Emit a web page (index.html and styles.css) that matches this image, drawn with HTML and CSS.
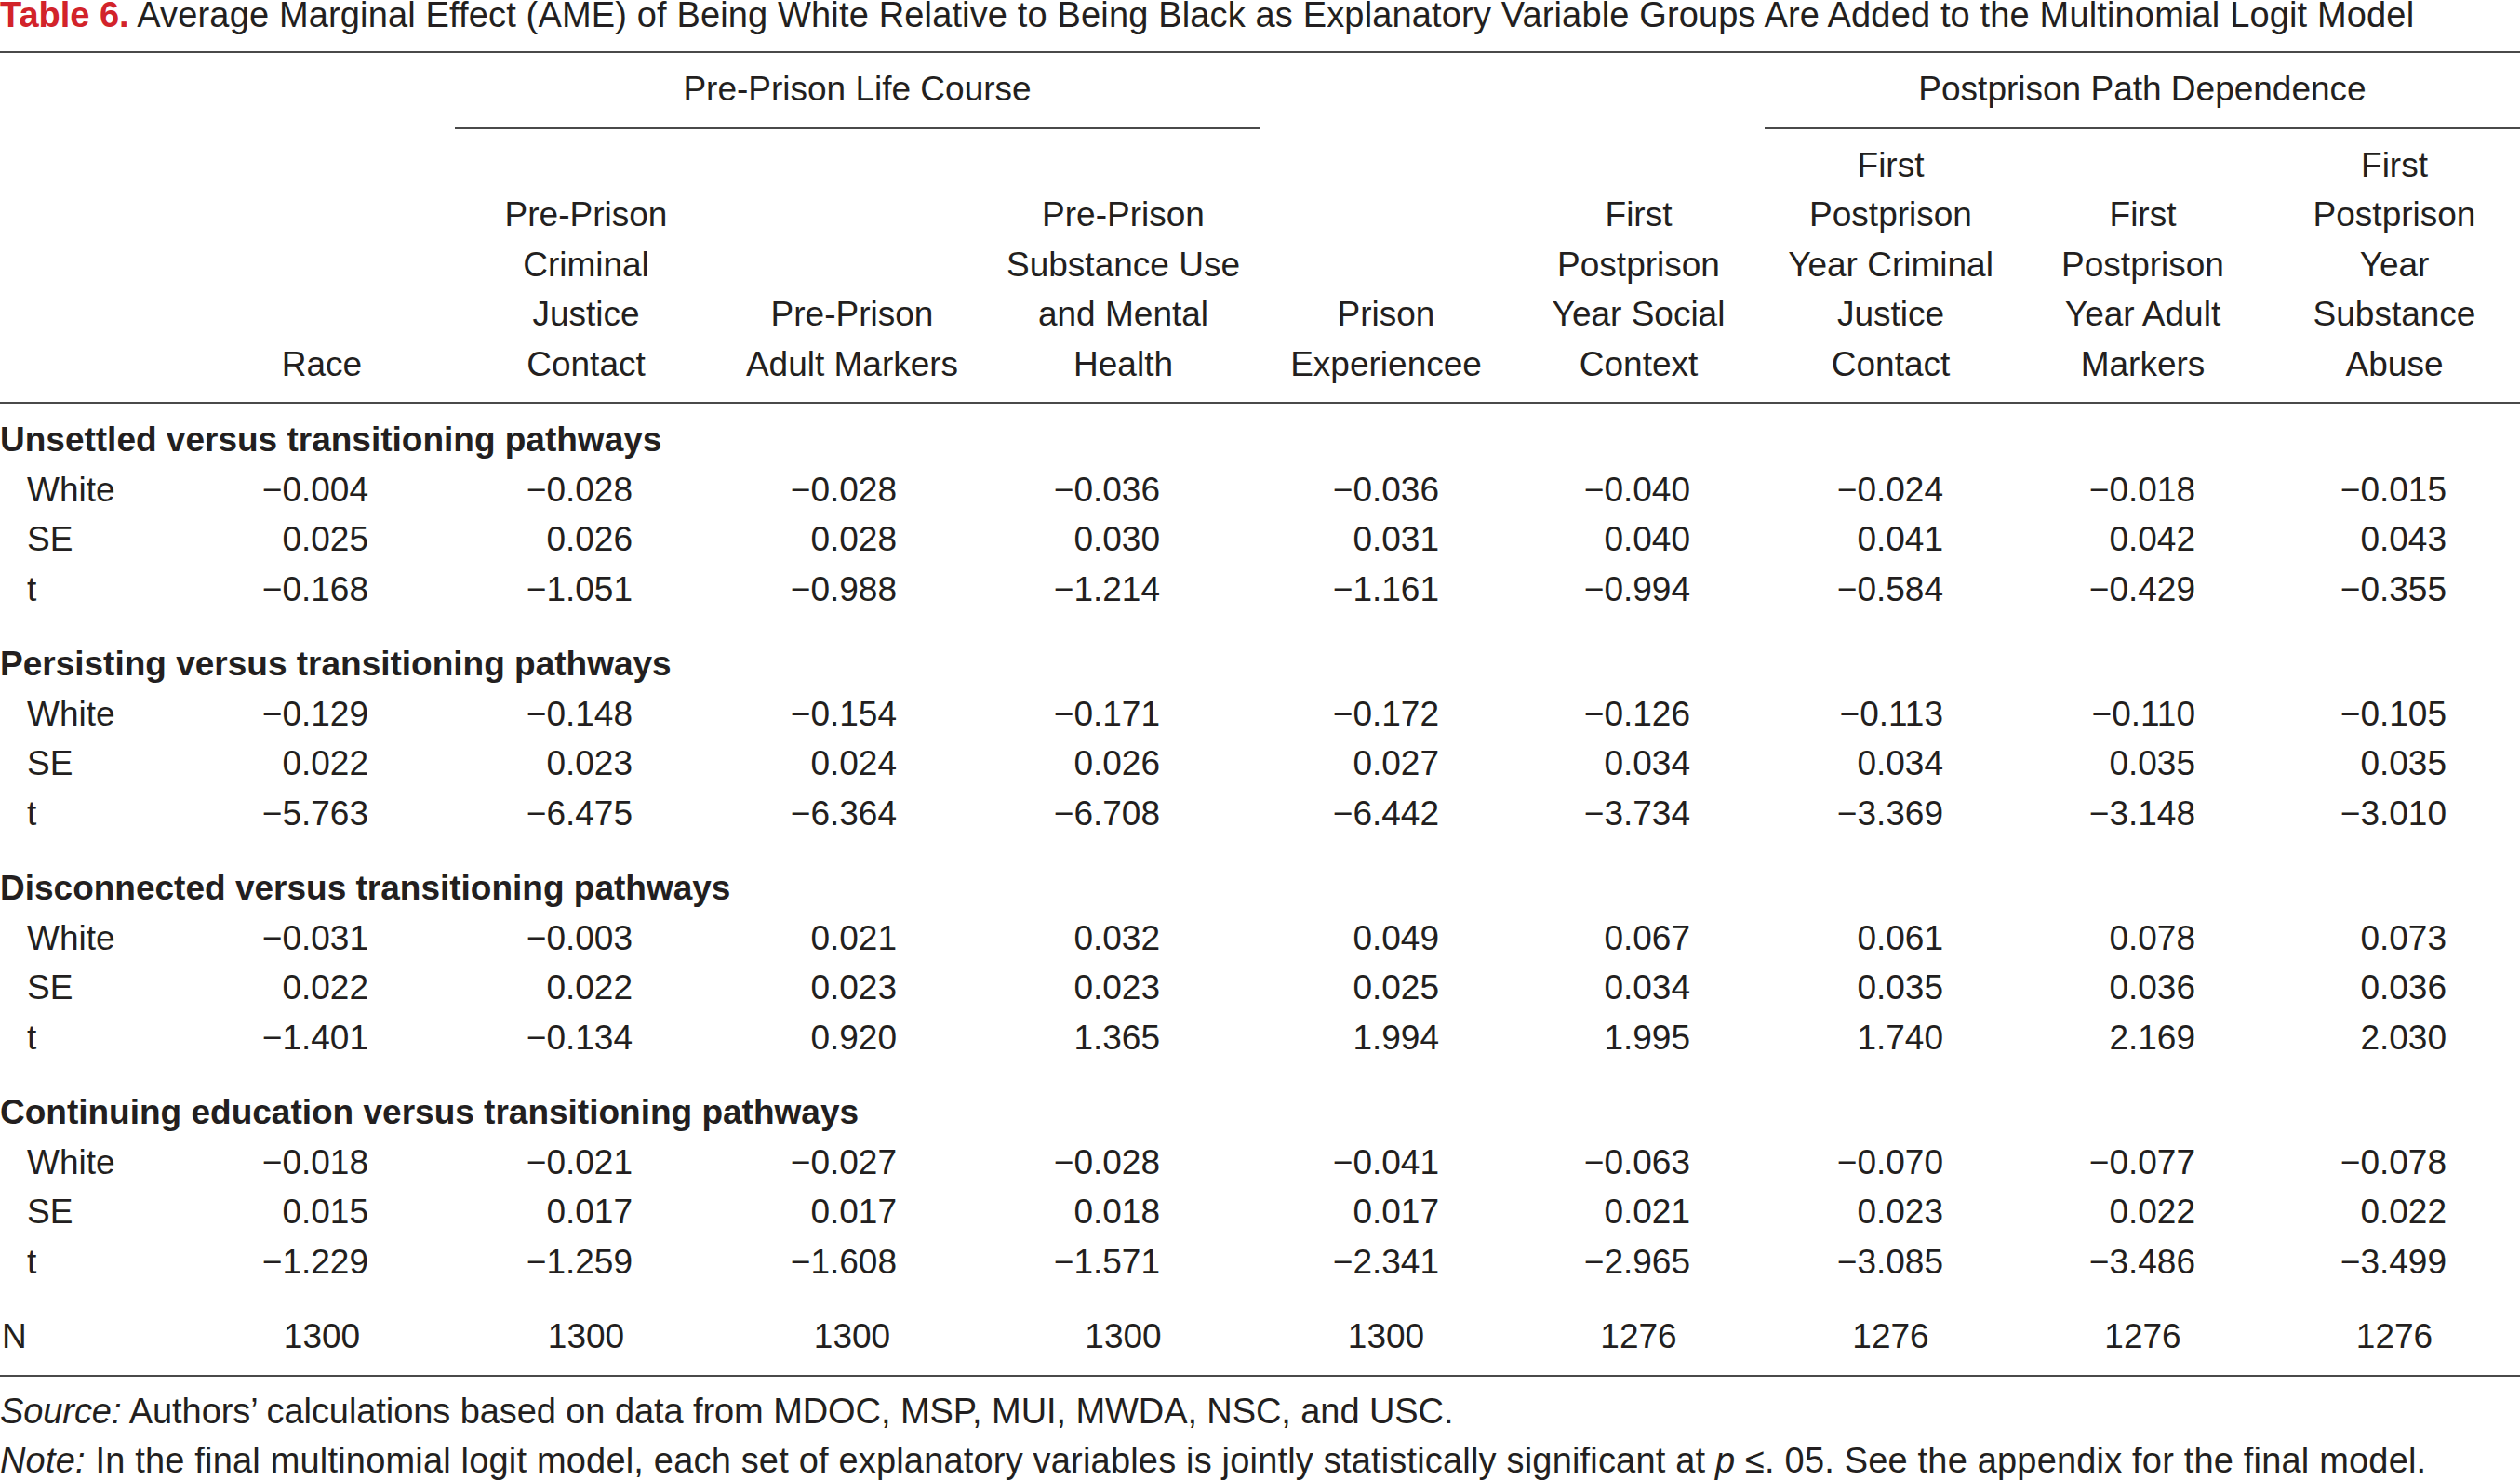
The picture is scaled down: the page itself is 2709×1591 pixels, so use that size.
FILE: index.html
```html
<!DOCTYPE html>
<html lang="en">
<head>
<meta charset="utf-8">
<title>Table 6</title>
<link rel="stylesheet" href="styles.css">
</head>
<body>
<div class="page">
  <div class="title"><span class="label">Table 6.</span> Average Marginal Effect (AME) of Being White Relative to Being Black as Explanatory Variable Groups Are Added to the Multinomial Logit Model</div>
  <table class="ame">
    <colgroup>
      <col class="w-stub"><col class="w-race"><col class="w-c2"><col class="w-c3"><col class="w-c4"><col class="w-c5"><col class="w-c6"><col class="w-c7"><col class="w-c8"><col class="w-c9">
    </colgroup>
    <thead>
      <tr class="spanners">
        <th></th><th></th>
        <th colspan="3" class="span-rule">Pre-Prison Life Course</th>
        <th></th><th></th>
        <th colspan="3" class="span-rule">Postprison Path Dependence</th>
      </tr>
      <tr class="colheads">
        <th></th>
        <th>Race</th>
        <th>Pre-Prison<br>Criminal<br>Justice<br>Contact</th>
        <th>Pre-Prison<br>Adult Markers</th>
        <th>Pre-Prison<br>Substance Use<br>and Mental<br>Health</th>
        <th>Prison<br>Experiencee</th>
        <th>First<br>Postprison<br>Year Social<br>Context</th>
        <th>First<br>Postprison<br>Year Criminal<br>Justice<br>Contact</th>
        <th>First<br>Postprison<br>Year Adult<br>Markers</th>
        <th>First<br>Postprison<br>Year<br>Substance<br>Abuse</th>
      </tr>
    </thead>
    <tbody>
      <tr class="group first"><td colspan="10">Unsettled versus transitioning pathways</td></tr>
      <tr><td class="stub">White</td><td>−0.004</td><td>−0.028</td><td>−0.028</td><td>−0.036</td><td>−0.036</td><td>−0.040</td><td>−0.024</td><td>−0.018</td><td>−0.015</td></tr>
      <tr><td class="stub">SE</td><td>0.025</td><td>0.026</td><td>0.028</td><td>0.030</td><td>0.031</td><td>0.040</td><td>0.041</td><td>0.042</td><td>0.043</td></tr>
      <tr><td class="stub">t</td><td>−0.168</td><td>−1.051</td><td>−0.988</td><td>−1.214</td><td>−1.161</td><td>−0.994</td><td>−0.584</td><td>−0.429</td><td>−0.355</td></tr>

      <tr class="group"><td colspan="10">Persisting versus transitioning pathways</td></tr>
      <tr><td class="stub">White</td><td>−0.129</td><td>−0.148</td><td>−0.154</td><td>−0.171</td><td>−0.172</td><td>−0.126</td><td>−0.113</td><td>−0.110</td><td>−0.105</td></tr>
      <tr><td class="stub">SE</td><td>0.022</td><td>0.023</td><td>0.024</td><td>0.026</td><td>0.027</td><td>0.034</td><td>0.034</td><td>0.035</td><td>0.035</td></tr>
      <tr><td class="stub">t</td><td>−5.763</td><td>−6.475</td><td>−6.364</td><td>−6.708</td><td>−6.442</td><td>−3.734</td><td>−3.369</td><td>−3.148</td><td>−3.010</td></tr>

      <tr class="group"><td colspan="10">Disconnected versus transitioning pathways</td></tr>
      <tr><td class="stub">White</td><td>−0.031</td><td>−0.003</td><td>0.021</td><td>0.032</td><td>0.049</td><td>0.067</td><td>0.061</td><td>0.078</td><td>0.073</td></tr>
      <tr><td class="stub">SE</td><td>0.022</td><td>0.022</td><td>0.023</td><td>0.023</td><td>0.025</td><td>0.034</td><td>0.035</td><td>0.036</td><td>0.036</td></tr>
      <tr><td class="stub">t</td><td>−1.401</td><td>−0.134</td><td>0.920</td><td>1.365</td><td>1.994</td><td>1.995</td><td>1.740</td><td>2.169</td><td>2.030</td></tr>

      <tr class="group"><td colspan="10">Continuing education versus transitioning pathways</td></tr>
      <tr><td class="stub">White</td><td>−0.018</td><td>−0.021</td><td>−0.027</td><td>−0.028</td><td>−0.041</td><td>−0.063</td><td>−0.070</td><td>−0.077</td><td>−0.078</td></tr>
      <tr><td class="stub">SE</td><td>0.015</td><td>0.017</td><td>0.017</td><td>0.018</td><td>0.017</td><td>0.021</td><td>0.023</td><td>0.022</td><td>0.022</td></tr>
      <tr><td class="stub">t</td><td>−1.229</td><td>−1.259</td><td>−1.608</td><td>−1.571</td><td>−2.341</td><td>−2.965</td><td>−3.085</td><td>−3.486</td><td>−3.499</td></tr>

      <tr class="total"><td class="stub-n">N</td><td>1300</td><td>1300</td><td>1300</td><td>1300</td><td>1300</td><td>1276</td><td>1276</td><td>1276</td><td>1276</td></tr>
    </tbody>
  </table>
  <div class="notes">
    <p class="source"><em>Source:</em> Authors’ calculations based on data from MDOC, MSP, MUI, MWDA, NSC, and USC.</p>
    <p class="note"><em>Note:</em> In the final multinomial logit model, each set of explanatory variables is jointly statistically significant at <em>p</em> ≤. 05. See the appendix for the final model.</p>
  </div>
</div>
</body>
</html>
```
FILE: styles.css
```css
html, body {
  margin: 0;
  padding: 0;
  background: #ffffff;
}

.page {
  width: 2709px;
  font-family: "Liberation Sans", Arial, sans-serif;
  color: #231f20;
}

.title {
  font-size: 38px;
  letter-spacing: 0.15px;
  line-height: 33px;
  padding-bottom: 22px;
  border-bottom: 2px solid #4a4a4a;
  white-space: nowrap;
}

.title .label {
  color: #d2232a;
  font-weight: 700;
  letter-spacing: 0;
}

.ame {
  width: 2709px;
  table-layout: fixed;
  border-collapse: separate;
  border-spacing: 0;
  font-size: 37px;
  line-height: 53.5px;
}

.w-stub { width: 203px; }
.w-race { width: 286px; }
.w-c2 { width: 282px; }
.w-c3 { width: 290px; }
.w-c4 { width: 293px; }
.w-c5 { width: 272px; }
.w-c6 { width: 271px; }
.w-c7 { width: 271px; }
.w-c8 { width: 271px; }
.w-c9 { width: 270px; }

.ame th,
.ame td {
  padding: 0;
  font-weight: 400;
  white-space: nowrap;
}

.spanners th {
  padding-top: 12px;
  padding-bottom: 14px;
  text-align: center;
  border-bottom: 2px solid transparent;
}

.spanners th.span-rule {
  border-bottom-color: #4a4a4a;
}

.colheads th {
  padding-top: 12px;
  padding-bottom: 14px;
  text-align: center;
  vertical-align: bottom;
  border-bottom: 2px solid #4a4a4a;
}

.ame tbody td {
  text-align: right;
}

.ame tbody td:nth-child(2) { padding-right: 93px; }
.ame tbody td:nth-child(3) { padding-right: 91px; }
.ame tbody td:nth-child(4) { padding-right: 97px; }
.ame tbody td:nth-child(5) { padding-right: 107px; }
.ame tbody td:nth-child(6) { padding-right: 79px; }
.ame tbody td:nth-child(7) { padding-right: 80px; }
.ame tbody td:nth-child(8) { padding-right: 79px; }
.ame tbody td:nth-child(9) { padding-right: 79px; }
.ame tbody td:nth-child(10) { padding-right: 79px; }

.ame tbody td.stub {
  text-align: left;
  padding-left: 29px;
  padding-right: 0;
}

.ame tbody tr.group td {
  text-align: left;
  font-weight: 700;
  padding-top: 27px;
  padding-right: 0;
}

.ame tbody tr.group.first td {
  padding-top: 12px;
}

.ame tbody tr.total td {
  padding-top: 27px;
  padding-bottom: 14px;
  padding-right: 0;
  text-align: center;
  border-bottom: 2px solid #4a4a4a;
}

.ame tbody tr.total td.stub-n {
  text-align: left;
  padding-left: 2px;
}

.notes {
  margin-top: 11px;
  font-size: 38px;
  line-height: 53.5px;
}

.notes p {
  margin: 0;
  white-space: nowrap;
}

.notes .source {
  letter-spacing: -0.08px;
}

.notes .note {
  letter-spacing: 0.18px;
}
```
